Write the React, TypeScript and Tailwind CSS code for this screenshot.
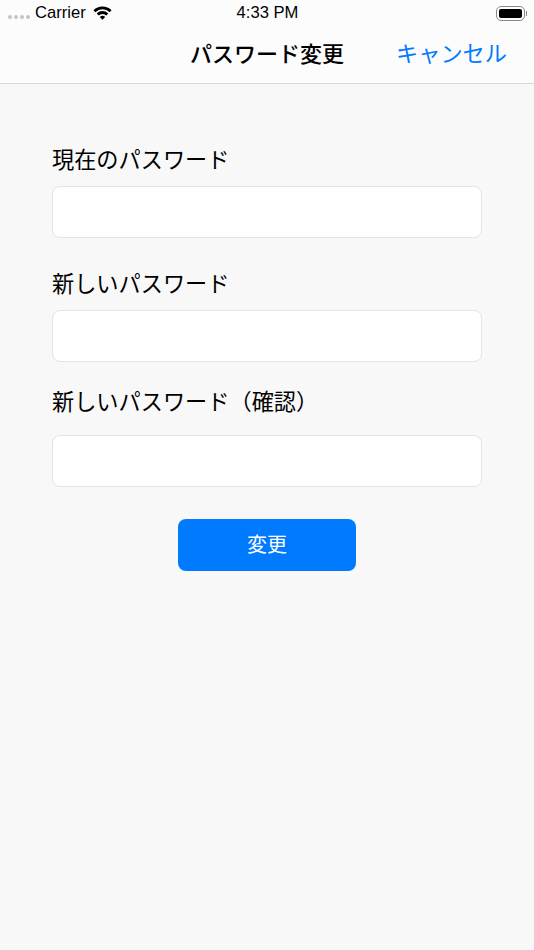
const jpFont = "font-['Noto_Sans_CJK_JP','Noto_Sans',sans-serif]"

function WifiIcon() {
  return (
    <svg width="19" height="14" viewBox="0 0 19 14" fill="none" stroke="#000" strokeWidth="2.800">
      <path d="M1.400 5.200A11.500 11.500 0 0 1 17.600 5.200" />
      <path d="M4.700 8.500A6.800 6.800 0 0 1 14.300 8.500" />
      <path d="M9.500 13.800L6.800 11A3.800 3.800 0 0 1 12.200 11Z" fill="#000" stroke="none" />
    </svg>
  )
}

function StatusBar() {
  return (
    <div className="flex h-[27px] items-center justify-between pl-2 pr-[7px] font-['Liberation_Sans',sans-serif] text-[16.600px] text-black">
      <div className="flex flex-1 items-center">
        <div className="mt-[8px] flex gap-[2px]">
          {[0, 1, 2, 3].map((i) => (
            <div key={i} className="size-[4px] rounded-full bg-[#c4c4c4]" />
          ))}
        </div>
        <span className="ml-[5px]">Carrier</span>
        <div className="ml-[7px]">
          <WifiIcon />
        </div>
      </div>
      <span>4:33 PM</span>
      <div className="flex flex-1 items-center justify-end">
        <div className="flex h-[15px] w-[29px] items-center rounded-[5px] border border-[#8a8a8a] p-[2px]">
          <div className="h-full w-full rounded-[2px] bg-black" />
        </div>
        <div className="ml-[1px] h-[5px] w-[1px] bg-[#8a8a8a]" />
      </div>
    </div>
  )
}

function NavBar() {
  return (
    <div className="relative flex h-[56px] items-center justify-center pb-[5px]">
      <h1 className="text-[22px] font-medium text-black">パスワード変更</h1>
      <button className="absolute right-[27px] top-[9px] text-[22.200px] leading-[32px] text-[#007aff]">キャンセル</button>
    </div>
  )
}

function Field({ label, gap }: { label: string; gap: string }) {
  return (
    <div>
      <label className={`block text-[22.200px] font-normal leading-[32px] text-black ${gap}`}>{label}</label>
      <div className="h-[52px] rounded-[8px] border border-[#e3e3e3] bg-white" />
    </div>
  )
}

export default function App() {
  return (
    <div className={`flex h-[950px] w-[534px] flex-col overflow-hidden bg-[#f8f8f8] ${jpFont}`}>
      <div className="h-[84px] border-b border-[#d9d9d9] bg-[#fcfcfc]">
        <StatusBar />
        <NavBar />
      </div>
      <div className="flex flex-col px-[52px] pt-[58px]">
        <Field label="現在のパスワード" gap="mb-[12px]" />
        <div className="mt-[28px]">
          <Field label="新しいパスワード" gap="mb-[12px]" />
        </div>
        <div className="mt-[22px]">
          <Field label="新しいパスワード（確認）" gap="mb-[19px]" />
        </div>
        <button className="mx-auto mt-[32px] h-[52px] w-[178px] rounded-[8px] bg-[#007aff] pb-[2px] text-[20px] font-normal text-white">
          変更
        </button>
      </div>
    </div>
  )
}
